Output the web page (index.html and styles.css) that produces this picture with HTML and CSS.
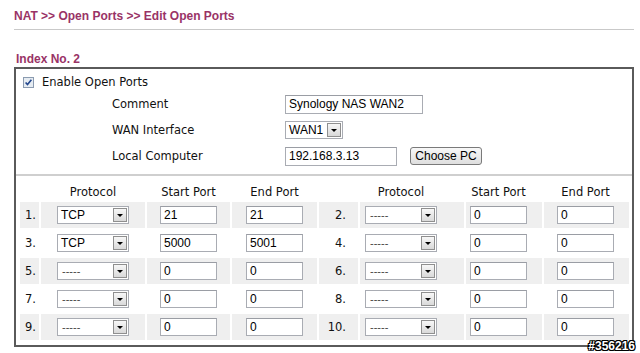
FILE: index.html
```html
<!DOCTYPE html>
<html>
<head>
<meta charset="utf-8">
<title>Edit Open Ports</title>
<link rel="stylesheet" href="styles.css">
</head>
<body>
<div class="page">
  <h1 class="crumb">NAT &gt;&gt; Open Ports &gt;&gt; Edit Open Ports</h1>
  <h2 class="index">Index No. 2</h2>
  <div class="box">
    <div class="enable">
      <span class="check"><svg width="11" height="11" viewBox="0 0 11 11"><rect x="0.5" y="0.5" width="10" height="10" fill="#e6ecf2" stroke="#8b9bb0"/><path d="M2.6 5.4 L4.5 7.6 L8.4 2.8" fill="none" stroke="#24488e" stroke-width="1.6"/></svg></span>
      <span class="label">Enable Open Ports</span>
    </div>
    <div class="form">
      <div class="lbl">Comment</div>
      <div class="ctl"><span class="field w138">Synology NAS WAN2</span></div>
      <div class="lbl">WAN Interface</div>
      <div class="ctl"><span class="sel w58"><span class="val">WAN1</span><span class="arrow"><i></i></span></span></div>
      <div class="lbl">Local Computer</div>
      <div class="ctl"><span class="field w111">192.168.3.13</span><span class="btn">Choose PC</span></div>
    </div>
    <div class="sep"></div>
    <div class="ports">
      <div class="c h n1"></div>
      <div class="c h p1"><span class="hd wsel">Protocol</span></div>
      <div class="c h s1"><span class="hd win">Start Port</span></div>
      <div class="c h e1"><span class="hd win">End Port</span></div>
      <div class="c h n2"></div>
      <div class="c h p2"><span class="hd wsel">Protocol</span></div>
      <div class="c h s2"><span class="hd win">Start Port</span></div>
      <div class="c h e2"><span class="hd win">End Port</span></div>

      <div class="c g n1">1.</div>
      <div class="c g p1"><span class="sel wsel"><span class="val">TCP</span><span class="arrow"><i></i></span></span></div>
      <div class="c g s1"><span class="field win">21</span></div>
      <div class="c g e1"><span class="field win">21</span></div>
      <div class="c g n2">2.</div>
      <div class="c g p2"><span class="sel wsel"><span class="val dash">-----</span><span class="arrow"><i></i></span></span></div>
      <div class="c g s2"><span class="field win">0</span></div>
      <div class="c g e2"><span class="field win">0</span></div>

      <div class="c n1">3.</div>
      <div class="c p1"><span class="sel wsel"><span class="val">TCP</span><span class="arrow"><i></i></span></span></div>
      <div class="c s1"><span class="field win">5000</span></div>
      <div class="c e1"><span class="field win">5001</span></div>
      <div class="c n2">4.</div>
      <div class="c p2"><span class="sel wsel"><span class="val dash">-----</span><span class="arrow"><i></i></span></span></div>
      <div class="c s2"><span class="field win">0</span></div>
      <div class="c e2"><span class="field win">0</span></div>

      <div class="c g n1">5.</div>
      <div class="c g p1"><span class="sel wsel"><span class="val dash">-----</span><span class="arrow"><i></i></span></span></div>
      <div class="c g s1"><span class="field win">0</span></div>
      <div class="c g e1"><span class="field win">0</span></div>
      <div class="c g n2">6.</div>
      <div class="c g p2"><span class="sel wsel"><span class="val dash">-----</span><span class="arrow"><i></i></span></span></div>
      <div class="c g s2"><span class="field win">0</span></div>
      <div class="c g e2"><span class="field win">0</span></div>

      <div class="c n1">7.</div>
      <div class="c p1"><span class="sel wsel"><span class="val dash">-----</span><span class="arrow"><i></i></span></span></div>
      <div class="c s1"><span class="field win">0</span></div>
      <div class="c e1"><span class="field win">0</span></div>
      <div class="c n2">8.</div>
      <div class="c p2"><span class="sel wsel"><span class="val dash">-----</span><span class="arrow"><i></i></span></span></div>
      <div class="c s2"><span class="field win">0</span></div>
      <div class="c e2"><span class="field win">0</span></div>

      <div class="c g n1">9.</div>
      <div class="c g p1"><span class="sel wsel"><span class="val dash">-----</span><span class="arrow"><i></i></span></span></div>
      <div class="c g s1"><span class="field win">0</span></div>
      <div class="c g e1"><span class="field win">0</span></div>
      <div class="c g n2">10.</div>
      <div class="c g p2"><span class="sel wsel"><span class="val dash">-----</span><span class="arrow"><i></i></span></span></div>
      <div class="c g s2"><span class="field win">0</span></div>
      <div class="c g e2"><span class="field win">0</span></div>
    </div>
  </div>
  <div class="mark">#356216</div>
</div>
</body>
</html>
```

FILE: styles.css
```css
html, body {
  margin: 0;
  padding: 0;
  background: #ffffff;
}

.page {
  position: relative;
  width: 640px;
  height: 353px;
  padding: 9px 0 0 14px;
  box-sizing: border-box;
  font-family: "DejaVu Sans", Verdana, sans-serif;
  font-size: 11.5px;
  color: #111;
}

.crumb {
  margin: 0;
  width: 620px;
  font-family: "Liberation Sans", Arial, sans-serif;
  font-weight: bold;
  font-size: 12px;
  line-height: 14px;
  color: #993366;
  padding-bottom: 6px;
  border-bottom: 1px solid #c9c9c9;
}

.index {
  margin: 22px 0 1px 2px;
  font-family: "Liberation Sans", Arial, sans-serif;
  font-weight: bold;
  font-size: 12px;
  line-height: 14px;
  color: #993366;
}

.box {
  width: 620px;
  height: 280px;
  box-sizing: border-box;
  border: 2px solid #5a5a5a;
}

.enable {
  display: flex;
  align-items: center;
  height: 18px;
  margin-top: 4px;
  padding-left: 7px;
  gap: 8px;
}

.check {
  display: flex;
  width: 11px;
  height: 11px;
}

.form {
  display: grid;
  grid-template-columns: 173px 1fr;
  grid-auto-rows: 26px;
  padding-left: 96px;
}

.lbl {
  display: flex;
  align-items: center;
}

.ctl {
  display: flex;
  align-items: center;
  gap: 13px;
}

.field {
  display: flex;
  align-items: center;
  box-sizing: border-box;
  height: 19px;
  padding-left: 3px;
  border: 1px solid #a9acb3;
  border-top-color: #9a9da4;
  background: #fff;
  font-family: "Liberation Sans", Arial, sans-serif;
  font-size: 12px;
  color: #000;
}

.field.win {
  height: 18px;
}

.w138 { width: 138px; }
.w111 { width: 112px; }
.w58 { width: 58px; }
.win { width: 57px; }
.wsel { width: 72px; }

.sel {
  display: flex;
  align-items: center;
  box-sizing: border-box;
  height: 18px;
  border: 1px solid #a9acb3;
  background: #fff;
  font-family: "Liberation Sans", Arial, sans-serif;
  font-size: 12px;
  color: #000;
}

.sel .val {
  flex: 1;
  padding-left: 3px;
}

.sel .val.dash {
  font-size: 11px;
  color: #444;
  padding-left: 4px;
}

.arrow {
  display: flex;
  align-items: center;
  justify-content: center;
  box-sizing: border-box;
  width: 14px;
  height: 14px;
  margin-right: 1px;
  border: 1px solid #8f8f8f;
  background: linear-gradient(#f7f7f7, #d9d9d9);
}

.arrow i {
  display: block;
  width: 0;
  height: 0;
  border-left: 3px solid transparent;
  border-right: 3px solid transparent;
  border-top: 3px solid #000;
  margin-top: 1px;
}

.btn {
  display: flex;
  align-items: center;
  justify-content: center;
  box-sizing: border-box;
  width: 72px;
  height: 18px;
  border: 1px solid #7a7a7a;
  border-radius: 3px;
  background: linear-gradient(#f8f8f8, #dedede);
  font-family: "Liberation Sans", Arial, sans-serif;
  font-size: 12px;
  color: #000;
}

.sep {
  height: 2px;
  margin-top: 5px;
  background: #cfcfcf;
}

.ports {
  display: grid;
  grid-template-columns: 19px 104px 83px 85px 39px 104px 76px 85px;
  grid-template-rows: 20px repeat(5, 26px);
  gap: 2px;
  padding: 4px 0 0 4px;
}

.c {
  display: flex;
  align-items: center;
  box-sizing: border-box;
}

.c.h {
  align-items: flex-end;
  padding-bottom: 1px;
}

.g {
  background: #efefef;
}

.n1 { padding-left: 5px; }
.p1 { padding-left: 16px; }
.s1 { padding-left: 13px; }
.e1 { padding-left: 14px; }
.n2 { justify-content: flex-end; padding-right: 12px; }
.p2 { padding-left: 5px; }
.s2 { padding-left: 4px; }
.e2 { padding-left: 13px; }

.hd {
  display: block;
  text-align: center;
  white-space: nowrap;
}

.mark {
  position: absolute;
  right: 5px;
  bottom: 1px;
  font-family: "Liberation Sans", Arial, sans-serif;
  font-weight: bold;
  font-size: 12px;
  line-height: 12px;
  color: #fff;
  text-shadow: 1px 0 0 #000, -1px 0 0 #000, 0 1px 0 #000, 0 -1px 0 #000, 1px 1px 0 #000, -1px -1px 0 #000, 1px -1px 0 #000, -1px 1px 0 #000;
}
```
